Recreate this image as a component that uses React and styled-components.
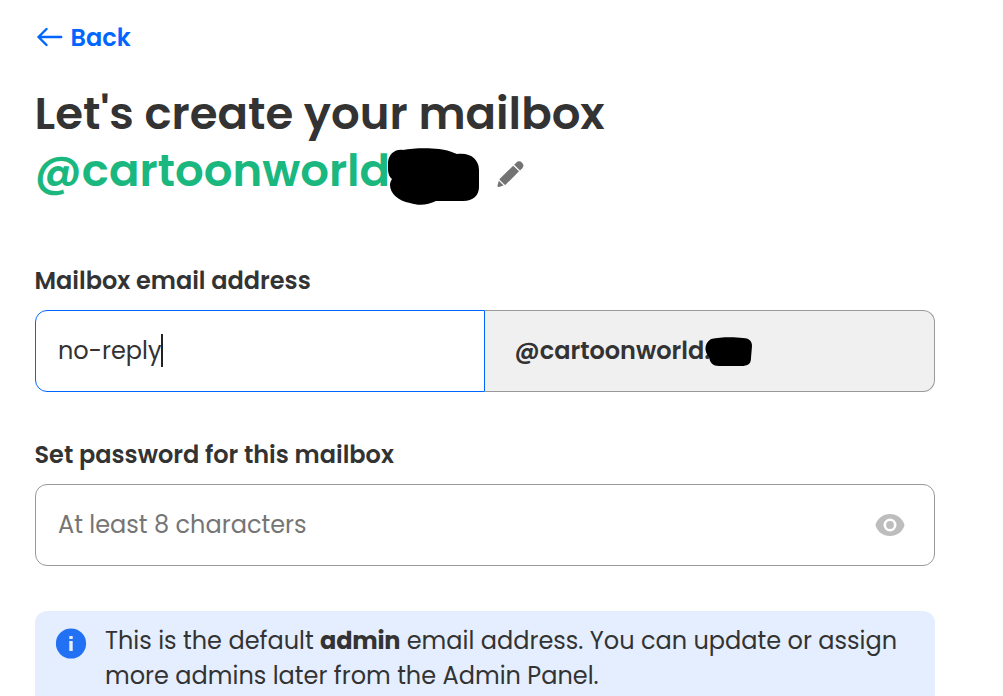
import React from 'react';
import styled, { createGlobalStyle } from 'styled-components';

const GlobalStyle = createGlobalStyle`
  * {
    box-sizing: border-box;
  }

  body {
    margin: 0;
    background: #fff;
    color: #333;
    font-family: Poppins, Inter, "Liberation Sans", sans-serif;
    font-size: 24px;
    overflow: hidden;
  }
`;

const Page = styled.main`
  width: 900px;
  height: 696px;
  margin-left: 35px;
  padding-top: 20px;
`;

const BackLink = styled.a`
  display: flex;
  align-items: center;
  gap: 7.5px;
  height: 35px;
  padding-left: 2px;
  color: #06f;
  font-weight: 600;
  text-decoration: none;

  svg {
    display: block;
    margin-top: -2px;
  }
`;

const Title = styled.h1`
  margin: 30px 0 0 -0.5px;
  font-size: 45px;
  font-weight: 600;
  line-height: 57px;
  white-space: nowrap;
`;

const DomainRow = styled.div`
  display: flex;
  align-items: flex-start;
  height: 57px;
  margin-left: -0.5px;
  color: #1ab77f;
  font-size: 45px;
  font-weight: 600;
  line-height: 57px;
`;

const DomainName = styled.span`
  width: 353px;
  white-space: nowrap;
`;

const TitleMask = styled.svg`
  flex: none;
  margin-top: 6px;
`;

const EditButton = styled.button`
  margin: 19px 0 0 18px;
  padding: 0;
  border: 0;
  background: none;

  svg {
    display: block;
  }
`;

const Field = styled.section`
  margin-top: ${(props) => props.$top}px;
`;

const Label = styled.label`
  display: block;
  height: 35px;
  margin: 0 0 12px -0.5px;
  font-weight: 600;
  line-height: 35px;
  white-space: nowrap;
`;

const Group = styled.div`
  display: flex;
  height: 82px;
`;

const EmailInput = styled.div`
  display: flex;
  align-items: center;
  width: 450px;
  padding: 0 0 2px 22px;
  border: 1px solid #06f;
  border-radius: 12px 0 0 12px;
`;

const Caret = styled.i`
  width: 2px;
  height: 33px;
  background: #222;
`;

const Suffix = styled.div`
  display: flex;
  align-items: center;
  flex: 1;
  padding: 0 0 2px 29.5px;
  border: 1px solid #999;
  border-left: 0;
  border-radius: 0 12px 12px 0;
  background: #f0f0f0;
  font-weight: 600;

  span {
    width: 190px;
    white-space: nowrap;
  }

  svg {
    margin-top: 3px;
  }
`;

const PasswordBox = styled.div`
  display: flex;
  align-items: center;
  justify-content: space-between;
  height: 82px;
  padding: 0 29px 2px 22px;
  border: 1px solid #999;
  border-radius: 12px;

  svg {
    margin-top: 1px;
  }
`;

const PasswordInput = styled.input`
  width: 600px;
  padding: 0;
  border: 0;
  outline: 0;
  font: inherit;

  &::placeholder {
    color: #757575;
    opacity: 1;
  }
`;

const Notice = styled.aside`
  display: flex;
  gap: 18px;
  height: 100px;
  margin-top: 45px;
  padding: 12px 20px 12px 21px;
  border-radius: 12px;
  background: #e5eeff;
  line-height: 35px;

  svg {
    flex: none;
    margin-top: 5px;
  }

  p {
    margin: 0;
    white-space: nowrap;
  }

  b {
    font-weight: 700;
    letter-spacing: -0.2px;
  }
`;

const ArrowIcon = () => (
  <svg width="26" height="20" viewBox="0 0 26 20" fill="none" stroke="currentColor" strokeWidth="2.4" strokeLinecap="round" strokeLinejoin="round">
    <path d="M24.2 10H1.5M9.5 2 1.5 10l8 8" />
  </svg>
);

const PencilIcon = () => (
  <svg width="27" height="27" viewBox="0 0 27 27" fill="#737373">
    <path d="M16.2 4.7 22 10.300 8.800 23.600a1 1 0 0 1-1.400 0L2.800 19a1 1 0 0 1 0-1.200z" />
    <path d="m17.200 3.700 2-2a4.200 4.200 0 0 1 5.900 0 4.200 4.200 0 0 1 0 5.700L23 9.400z" />
    <path d="M1.800 19.800 6.600 24.500l-4.800 1.400c-.8.200-1.500-.5-1.300-1.300z" />
  </svg>
);

const EyeIcon = () => (
  <svg width="30" height="24" viewBox="0 0 30 24">
    <path fill="#bdbdbd" d="M15 1C7.800 1 2.800 5.500.7 11.200a2.400 2.400 0 0 0 0 1.800C2.800 18.800 7.800 23 15 23s12.200-4.200 14.300-10a2.400 2.400 0 0 0 0-1.800C27.200 5.500 22.200 1 15 1z" />
    <circle cx="15" cy="12" r="5.200" fill="#bdbdbd" stroke="#fff" strokeWidth="2.600" />
  </svg>
);

const InfoIcon = () => (
  <svg width="31" height="31" viewBox="0 0 31 31">
    <circle cx="15" cy="15.500" r="15.100" fill="#2271f5" />
    <path fill="#e5eeff" d="M13.300 8h3.400v3h-3.400zM13.300 13h3.400v10h-3.400z" />
  </svg>
);

const App = () => {
  return (
    <>
      <GlobalStyle />
      <Page>
        <BackLink href="#">
          <ArrowIcon />
          <span>Back</span>
        </BackLink>
        <Title>Let's create your mailbox</Title>
        <DomainRow>
          <DomainName>@cartoonworld</DomainName>
          <TitleMask width="91" height="57" viewBox="0 0 91 57">
            <path d="M0 14C1 6 7 1 15 2 29-1 54 0 61 3l8 3c13-2 22 5 22 16v17c0 9-7 15-18 14H48c-8 4-17 5-26 2C10 53 2 45 2 37c0-3 1-4 2-6-5-4-4-11-4-17z" />
          </TitleMask>
          <EditButton aria-label="Edit domain">
            <PencilIcon />
          </EditButton>
        </DomainRow>
        <Field $top={64}>
          <Label>Mailbox email address</Label>
          <Group>
            <EmailInput>
              <span>no-reply</span>
              <Caret />
            </EmailInput>
            <Suffix>
              <span>@cartoonworld.</span>
              <svg width="47" height="30" viewBox="0 0 47 30">
                <path d="M6 2C15 0 29 0 38 1c6 0 9 3 9 8l-1 12c0 6-3 8-10 8H14c-6 0-9-3-10-9-5-5-5-14 2-18z" />
              </svg>
            </Suffix>
          </Group>
        </Field>
        <Field $top={45}>
          <Label htmlFor="password">Set password for this mailbox</Label>
          <PasswordBox>
            <PasswordInput id="password" type="password" placeholder="At least 8 characters" />
            <EyeIcon />
          </PasswordBox>
        </Field>
        <Notice>
          <InfoIcon />
          <p>
            This is the default <b>admin</b> email address. You can update or assign
            <br />
            more admins later from the Admin Panel.
          </p>
        </Notice>
      </Page>
    </>
  );
};

export default App;
